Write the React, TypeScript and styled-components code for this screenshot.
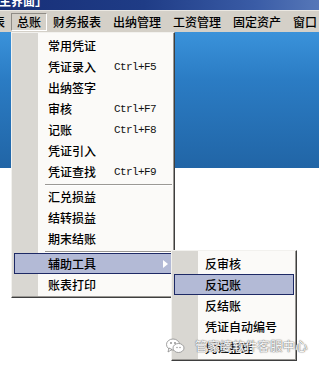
import React from "react";
import styled, { createGlobalStyle, css } from "styled-components";

const GlobalStyle = createGlobalStyle`
  html, body { margin: 0; padding: 0; background: #ffffff; }
  body {
    font-family: "Noto Sans CJK SC", "Noto Sans", sans-serif;
    font-size: 12px;
    font-weight: 500;
    color: #000;
  }
`;

const Screen = styled.div`
  position: relative;
  width: 319px;
  height: 372px;
  overflow: hidden;
  background: #ffffff;
  display: flex;
  flex-direction: column;
`;

const TitleBar = styled.div`
  flex: none;
  height: 10px;
  overflow: hidden;
  background: linear-gradient(to right, #172f78 0%, #1f3c86 45%, #3a5ca6 80%, #5677b8 100%);
  border-bottom: 1px solid #ebe8e2;
`;

const TitleText = styled.div`
  margin: -6px 0 0 -1px;
  font-size: 12px;
  line-height: 14px;
  font-weight: bold;
  color: #ffffff;
  white-space: nowrap;
`;

const MenuBar = styled.div`
  flex: none;
  height: 21px;
  display: flex;
  align-items: center;
  background: #d4d0c8;
  white-space: nowrap;
`;

const MenuItem = styled.div<{ $open?: boolean; $shift?: number }>`
  height: 18px;
  box-sizing: border-box;
  display: flex;
  align-items: center;
  padding: 0 5px;
  border: 1px solid transparent;
  line-height: 12px;
  margin-left: ${(p) => p.$shift ?? 0}px;
  ${(p) =>
    p.$open &&
    css`
      border-color: #8f8c86 #ffffff #ffffff #8f8c86;
    `}
`;

const Desktop = styled.div`
  flex: 1;
  display: flex;
  flex-direction: column;
`;

const BlueArea = styled.div`
  height: 136px;
  background: linear-gradient(to bottom, #3a92da 0%, #2b7cc4 35%, #2165a6 100%);
`;

const Menu = styled.div<{ $left: number; $top: number; $width: number }>`
  position: absolute;
  left: ${(p) => p.$left}px;
  top: ${(p) => p.$top}px;
  width: ${(p) => p.$width}px;
  box-sizing: border-box;
  padding: 2px 0;
  border: 1px solid;
  border-color: #f2f1ee #3e3e3e #3e3e3e #f2f1ee;
  box-shadow: inset -1px -1px 0 #9a9894;
  background: linear-gradient(to right, #d9d7d2 0, #d9d7d2 26px, #fbfaf8 26px, #fbfaf8 100%);
`;

const Row = styled.div<{ $active?: boolean; $indent: number }>`
  height: 21px;
  box-sizing: border-box;
  margin: 0 2px;
  display: flex;
  align-items: center;
  padding-left: ${(p) => p.$indent}px;
  border: 1px solid transparent;
  line-height: 12px;
  white-space: nowrap;
  ${(p) =>
    p.$active &&
    css`
      background: #b3bad6;
      border-color: #1d2965;
    `}
`;

const Label = styled.span`
  width: 66px;
  flex: none;
`;

const Shortcut = styled.span`
  font-family: "Liberation Mono", "DejaVu Sans Mono", monospace;
  font-size: 11px;
  font-weight: 400;
  letter-spacing: -0.6px;
  color: #111;
`;

const Arrow = styled.svg`
  margin-left: auto;
  margin-right: 3px;
  flex: none;
`;

const Separator = styled.div`
  height: 4px;
  display: flex;
  align-items: center;
  margin: 0 2px 0 33px;
  &::after {
    content: "";
    flex: 1;
    height: 1px;
    background: #9b9995;
    box-shadow: 0 1px 0 #ffffff;
  }
`;

const Watermark = styled.div`
  position: absolute;
  left: 166px;
  top: 338px;
  display: flex;
  align-items: center;
  gap: 10px;
`;

const WatermarkText = styled.span`
  font-size: 12.5px;
  font-weight: 400;
  line-height: 16px;
  color: rgba(255, 255, 255, 0.95);
  text-shadow: 0 0 1px #7a7a7a, 0 0 1px #7a7a7a, 0 0 2px #b0b0b0;
  white-space: nowrap;
`;

type Item = { label: string; shortcut?: string } | { sep: true };

const mainItems: Item[] = [
  { label: "常用凭证" },
  { label: "凭证录入", shortcut: "Ctrl+F5" },
  { label: "出纳签字" },
  { label: "审核", shortcut: "Ctrl+F7" },
  { label: "记账", shortcut: "Ctrl+F8" },
  { label: "凭证引入" },
  { label: "凭证查找", shortcut: "Ctrl+F9" },
  { sep: true },
  { label: "汇兑损益" },
  { label: "结转损益" },
  { label: "期末结账" },
  { sep: true },
];

const subItems = ["反审核", "反记账", "反结账", "凭证自动编号", "凭证整理"];

export default function App() {
  return (
    <>
      <GlobalStyle />
      <Screen>
        <TitleBar>
          <TitleText>主界面」</TitleText>
        </TitleBar>
        <MenuBar>
          <MenuItem $shift={-25}>报表</MenuItem>
          <MenuItem $open>总账</MenuItem>
          <MenuItem>财务报表</MenuItem>
          <MenuItem>出纳管理</MenuItem>
          <MenuItem>工资管理</MenuItem>
          <MenuItem>固定资产</MenuItem>
          <MenuItem>窗口</MenuItem>
        </MenuBar>
        <Desktop>
          <BlueArea />
        </Desktop>

        <Menu $left={11} $top={32} $width={164}>
          {mainItems.map((it, i) =>
            "sep" in it ? (
              <Separator key={i} />
            ) : (
              <Row key={i} $indent={33}>
                <Label>{it.label}</Label>
                {it.shortcut && <Shortcut>{it.shortcut}</Shortcut>}
              </Row>
            )
          )}
          <Row $indent={33} $active>
            <Label>辅助工具</Label>
            <Arrow width="5" height="8" viewBox="0 0 5 8">
              <polygon points="0,0 5,4 0,8" fill="#ffffff" />
            </Arrow>
          </Row>
          <Row $indent={33}>
            <Label>账表打印</Label>
          </Row>
        </Menu>

        <Menu $left={171} $top={250} $width={126}>
          {subItems.map((s, i) => (
            <Row key={s} $indent={30} $active={i === 1}>
              {s}
            </Row>
          ))}
        </Menu>

        <Watermark>
          <svg width="19" height="16" viewBox="0 0 19 16">
            <ellipse cx="7" cy="6.5" rx="6.5" ry="5.5" fill="#ffffff" stroke="#8a8a8a" strokeWidth="0.8" />
            <polygon points="3,10 2,14 6,11.5" fill="#ffffff" stroke="#8a8a8a" strokeWidth="0.8" />
            <ellipse cx="12.5" cy="10" rx="5.5" ry="4.5" fill="#ffffff" stroke="#8a8a8a" strokeWidth="0.8" />
            <circle cx="5" cy="5" r="0.9" fill="#8a8a8a" />
            <circle cx="9" cy="5" r="0.9" fill="#8a8a8a" />
            <circle cx="11" cy="9.5" r="0.7" fill="#8a8a8a" />
            <circle cx="14" cy="9.5" r="0.7" fill="#8a8a8a" />
          </svg>
          <WatermarkText>管家婆软件客服中心</WatermarkText>
        </Watermark>
      </Screen>
    </>
  );
}
